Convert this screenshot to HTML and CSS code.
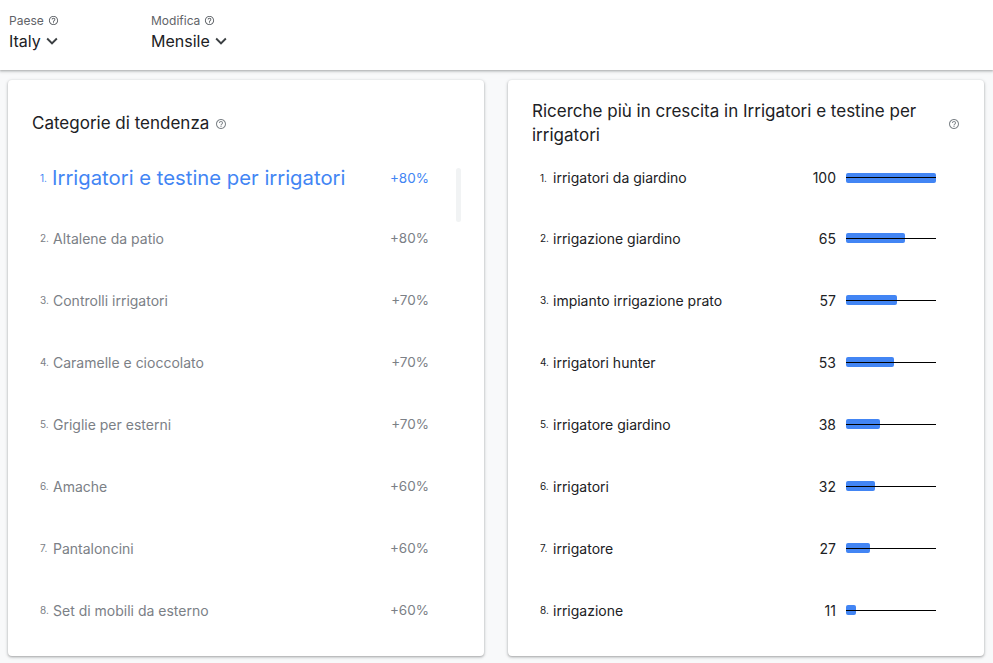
FILE: index.html
```html
<!DOCTYPE html>
<html lang="it">
<head>
<meta charset="utf-8">
<title>Tendenze</title>
<link rel="stylesheet" href="styles.css">
</head>
<body>
<header class="topbar">
  <div class="filter">
    <div class="filter-label">Paese <svg class="help" viewBox="0 0 24 24"><path d="M11 18h2v-2h-2v2zm1-16C6.48 2 2 6.48 2 12s4.48 10 10 10 10-4.48 10-10S17.52 2 12 2zm0 18c-4.41 0-8-3.59-8-8s3.59-8 8-8 8 3.59 8 8-3.59 8-8 8zm0-14c-2.21 0-4 1.79-4 4h2c0-1.1.9-2 2-2s2 .9 2 2c0 2-3 1.75-3 5h2c0-2.25 3-2.5 3-5 0-2.21-1.79-4-4-4z"/></svg></div>
    <div class="filter-value">Italy <svg class="chev" viewBox="0 0 24 24"><path d="M16.59 8.59L12 13.17 7.41 8.59 6 10l6 6 6-6z"/></svg></div>
  </div>
  <div class="filter">
    <div class="filter-label">Modifica <svg class="help" viewBox="0 0 24 24"><path d="M11 18h2v-2h-2v2zm1-16C6.48 2 2 6.48 2 12s4.48 10 10 10 10-4.48 10-10S17.52 2 12 2zm0 18c-4.41 0-8-3.59-8-8s3.59-8 8-8 8 3.59 8 8-3.59 8-8 8zm0-14c-2.21 0-4 1.79-4 4h2c0-1.1.9-2 2-2s2 .9 2 2c0 2-3 1.75-3 5h2c0-2.25 3-2.5 3-5 0-2.21-1.79-4-4-4z"/></svg></div>
    <div class="filter-value">Mensile <svg class="chev" viewBox="0 0 24 24"><path d="M16.59 8.59L12 13.17 7.41 8.59 6 10l6 6 6-6z"/></svg></div>
  </div>
</header>

<main class="cards">
  <section class="card">
    <h2 class="card-title">Categorie di tendenza <svg class="help" viewBox="0 0 24 24"><path d="M11 18h2v-2h-2v2zm1-16C6.48 2 2 6.48 2 12s4.48 10 10 10 10-4.48 10-10S17.52 2 12 2zm0 18c-4.41 0-8-3.59-8-8s3.59-8 8-8 8 3.59 8 8-3.59 8-8 8zm0-14c-2.21 0-4 1.79-4 4h2c0-1.1.9-2 2-2s2 .9 2 2c0 2-3 1.75-3 5h2c0-2.25 3-2.5 3-5 0-2.21-1.79-4-4-4z"/></svg></h2>
    <div class="cat-wrap">
      <ol class="cat-list">
        <li class="cat active"><span class="num">1.</span><span class="name">Irrigatori e testine per irrigatori</span><span class="pct">+80%</span></li>
        <li class="cat"><span class="num">2.</span><span class="name">Altalene da patio</span><span class="pct">+80%</span></li>
        <li class="cat"><span class="num">3.</span><span class="name">Controlli irrigatori</span><span class="pct">+70%</span></li>
        <li class="cat"><span class="num">4.</span><span class="name">Caramelle e cioccolato</span><span class="pct">+70%</span></li>
        <li class="cat"><span class="num">5.</span><span class="name">Griglie per esterni</span><span class="pct">+70%</span></li>
        <li class="cat"><span class="num">6.</span><span class="name">Amache</span><span class="pct">+60%</span></li>
        <li class="cat"><span class="num">7.</span><span class="name">Pantaloncini</span><span class="pct">+60%</span></li>
        <li class="cat"><span class="num">8.</span><span class="name">Set di mobili da esterno</span><span class="pct">+60%</span></li>
      </ol>
      <div class="scrollbar"></div>
    </div>
  </section>

  <section class="card">
    <div class="title-row">
      <h2 class="card-title wide">Ricerche più in crescita in Irrigatori e testine per irrigatori</h2>
      <svg class="help" viewBox="0 0 24 24"><path d="M11 18h2v-2h-2v2zm1-16C6.48 2 2 6.48 2 12s4.48 10 10 10 10-4.48 10-10S17.52 2 12 2zm0 18c-4.41 0-8-3.59-8-8s3.59-8 8-8 8 3.59 8 8-3.59 8-8 8zm0-14c-2.21 0-4 1.79-4 4h2c0-1.1.9-2 2-2s2 .9 2 2c0 2-3 1.75-3 5h2c0-2.25 3-2.5 3-5 0-2.21-1.79-4-4-4z"/></svg>
    </div>
    <ol class="q-list">
      <li class="q"><span class="num">1.</span><span class="name">irrigatori da giardino</span><span class="val">100</span><span class="bar"><span class="fill" style="width:90px"></span></span></li>
      <li class="q"><span class="num">2.</span><span class="name">irrigazione giardino</span><span class="val">65</span><span class="bar"><span class="fill" style="width:59px"></span></span></li>
      <li class="q"><span class="num">3.</span><span class="name">impianto irrigazione prato</span><span class="val">57</span><span class="bar"><span class="fill" style="width:51px"></span></span></li>
      <li class="q"><span class="num">4.</span><span class="name">irrigatori hunter</span><span class="val">53</span><span class="bar"><span class="fill" style="width:48px"></span></span></li>
      <li class="q"><span class="num">5.</span><span class="name">irrigatore giardino</span><span class="val">38</span><span class="bar"><span class="fill" style="width:34px"></span></span></li>
      <li class="q"><span class="num">6.</span><span class="name">irrigatori</span><span class="val">32</span><span class="bar"><span class="fill" style="width:29px"></span></span></li>
      <li class="q"><span class="num">7.</span><span class="name">irrigatore</span><span class="val">27</span><span class="bar"><span class="fill" style="width:24px"></span></span></li>
      <li class="q"><span class="num">8.</span><span class="name">irrigazione</span><span class="val">11</span><span class="bar"><span class="fill" style="width:10px"></span></span></li>
    </ol>
  </section>
</main>
</body>
</html>
```

FILE: styles.css
```css
* { box-sizing: border-box; }
html, body { margin: 0; padding: 0; }
body {
  background: #f8f9fa;
  font-family: Inter, "Noto Sans", Roboto, sans-serif;
  color: #202124;
  width: 993px;
  height: 663px;
  overflow: hidden;
}
.topbar {
  height: 70px;
  background: #fff;
  box-shadow: 0 1px 2px rgba(60,64,67,0.3), 0 1px 3px 1px rgba(60,64,67,0.15);
  display: flex;
  padding: 12px 0 0 9px;
  position: relative;
  z-index: 1;
}
.filter { width: 142px; }
.filter-label {
  font-size: 12px;
  color: #5f6368;
  display: flex;
  align-items: center;
  gap: 4px;
  height: 17px;
}
.filter-label .help { width: 11px; height: 11px; fill: #5f6368; }
.filter-value {
  font-size: 16px;
  display: flex;
  align-items: center;
  gap: 0;
  margin-top: 2px;
  height: 20px;
  color: #202124;
}
.chev { width: 22px; height: 22px; fill: #3c4043; }

.cards {
  display: flex;
  gap: 24px;
  padding: 10px 0 0 8px;
}
.card {
  width: 476px;
  height: 576px;
  background: #fff;
  border-radius: 4px;
  box-shadow: 0 1px 2px rgba(60,64,67,0.3), 0 1px 3px 1px rgba(60,64,67,0.15);
}
.card-title {
  margin: 0;
  font-size: 17px;
  font-weight: 400;
  line-height: 23px;
  color: #202124;
  display: flex;
  align-items: flex-start;
  gap: 6px;
  padding: 32px 0 0 24px;
  height: 68px;
}
.card-title .help { margin-top: 6px; }
.help { width: 12px; height: 12px; fill: #80868b; flex: none; }

.cat-wrap {
  display: flex;
  padding-left: 32px;
}
.cat-list {
  list-style: none;
  margin: 0;
  padding: 0;
  width: 389px;
}
.cat {
  display: flex;
  align-items: center;
  height: 62px;
  color: #7b8086;
  font-size: 14px;
}
.cat.active { height: 59px; color: #4285f4; }
.cat .num { font-size: 10px; width: 13px; flex: none; }
.cat .name { flex: 1; white-space: nowrap; }
.cat.active .name { font-size: 20.3px; margin-left: -1px; }
.cat .pct { font-size: 13.5px; }
.scrollbar {
  width: 5px;
  height: 54px;
  margin-top: 20px;
  margin-left: 27px;
  background: #f1f3f4;
  border-radius: 3px;
}

.title-row {
  display: flex;
  align-items: flex-start;
  padding: 20px 24px 0 24px;
  height: 68px;
}
.card-title.wide {
  padding: 0;
  height: auto;
  display: block;
  width: 400px;
  flex: none;
  line-height: 23.5px;
}
.title-row .help { margin: 18px 0 0 16px; width: 12px; height: 12px; }
.q-list {
  list-style: none;
  margin: 0;
  padding: 0 48px 0 32px;
}
.q {
  display: flex;
  align-items: center;
  height: 62px;
  font-size: 14px;
  color: #202124;
}
.q:first-child { height: 59px; }
.q .num { font-size: 10px; width: 13px; flex: none; }
.q .name { flex: 1; white-space: nowrap; }
.q .val { width: 40px; text-align: right; margin-right: 10px; }
.bar {
  width: 90px;
  height: 10px;
  position: relative;
  display: block;
}
.bar::after {
  content: "";
  position: absolute;
  left: 0;
  right: 0;
  top: 4.5px;
  height: 1px;
  background: #000;
}
.fill {
  display: block;
  height: 10px;
  background: #4285f4;
  border-radius: 2px;
}
```
